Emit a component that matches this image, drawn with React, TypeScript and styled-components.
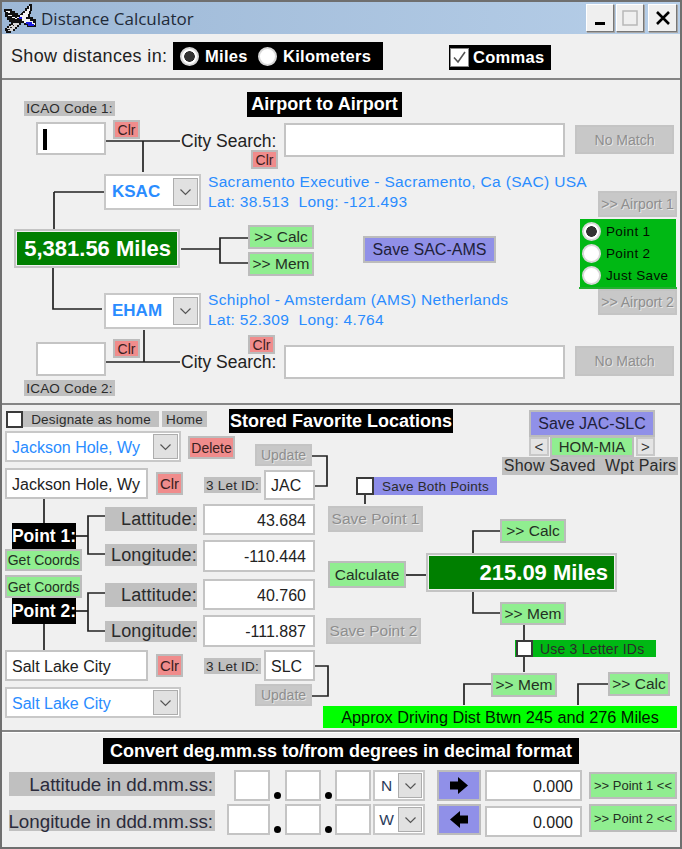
import React from 'react';
import styled, { createGlobalStyle, css } from 'styled-components';

const Global = createGlobalStyle`
  html, body { margin: 0; padding: 0; background: #f0f0f0; }
  #root { width: 682px; height: 849px; }
  * { box-sizing: border-box; }
`;

type Box = { $x: number; $y: number; $w: number; $h: number };

const at = css<Box>`
  position: absolute;
  left: ${(p) => p.$x}px;
  top: ${(p) => p.$y}px;
  width: ${(p) => p.$w}px;
  height: ${(p) => p.$h}px;
`;

const sans = `"Liberation Sans", Arial, sans-serif`;

const Window = styled.div`
  position: relative;
  width: 682px;
  height: 849px;
  overflow: hidden;
  background: #f0f0f0;
  display: flex;
  flex-direction: column;
  font-family: ${sans};
  color: #222;
  &::after {
    content: '';
    position: absolute;
    inset: 0;
    border: 2px solid #6f6f6f;
    pointer-events: none;
  }
`;

const TitleBar = styled.header`
  flex: 0 0 34px;
  display: flex;
  align-items: center;
  padding: 2px 4px 0 3px;
  background: linear-gradient(90deg, #9db8d6, #b6cee8);
`;

const Title = styled.span`
  margin-left: 5px;
  flex: 1;
  font: 17px "Open Sans", sans-serif;
  color: #1f2a38;
`;

const WinButton = styled.span<{ $w: number; $mr: number }>`
  width: ${(p) => p.$w}px;
  height: 28px;
  margin-right: ${(p) => p.$mr}px;
  display: flex;
  align-items: center;
  justify-content: center;
  background: #efefef;
  border: 1px solid #fff;
  border-right-color: #777;
  border-bottom-color: #777;
  box-shadow: 1px 1px 0 #a8a8a8;
`;

const UnitsBar = styled.section`
  flex: 0 0 46px;
  position: relative;
  display: flex;
  align-items: flex-start;
  padding: 8px 0 0 11px;
  border-bottom: 2px solid #858585;
`;

const UnitsLabel = styled.span`
  width: 162px;
  font-size: 18px;
  line-height: 28px;
  letter-spacing: 0.35px;
`;

const BlackStrip = styled.div<{ $w: number; $ml: number; $mt: number }>`
  width: ${(p) => p.$w}px;
  margin-left: ${(p) => p.$ml}px;
  margin-top: ${(p) => p.$mt}px;
  height: ${(p) => 28 - p.$mt}px;
  display: flex;
  align-items: center;
  background: #000;
  color: #fff;
  font-size: 16.5px;
  font-weight: 700;
  letter-spacing: 0.3px;
`;

const RadioDot = styled.span<{ $on?: boolean }>`
  flex: none;
  display: inline-block;
  width: 19px;
  height: 19px;
  border-radius: 50%;
  background: ${(p) =>
    p.$on ? 'radial-gradient(circle, #333 0 5px, #fff 5.6px)' : '#fff'};
  border: 2px solid #d8d8d8;
`;

const StripRadio = styled(RadioDot)`
  margin: 0 6px 0 7px;
`;

const StripText = styled.span<{ $w: number }>`
  width: ${(p) => p.$w}px;
`;

const CheckBox = styled.span`
  flex: none;
  display: flex;
  align-items: center;
  justify-content: center;
  width: 19px;
  height: 19px;
  background: #fff;
  border: 1px solid #888;
  margin: 0 4px 0 1px;
`;

const Canvas = styled.section<{ $h: number }>`
  position: relative;
  flex: 0 0 ${(p) => p.$h}px;
  border-bottom: 2px solid #858585;
`;

const Wires = styled.svg`
  position: absolute;
  left: 0;
  top: 0;
  width: 682px;
  height: 100%;
  pointer-events: none;
`;

const Heading = styled.div<Box>`
  ${at};
  background: #000;
  color: #fff;
  font-size: 18px;
  font-weight: 700;
  display: flex;
  align-items: center;
  justify-content: center;
  white-space: nowrap;
`;

const Tag = styled.div<Box & { $size?: number; $align?: string; $bg?: string; $pl?: number }>`
  ${at};
  background: ${(p) => p.$bg ?? '#c0c0c0'};
  color: #2b2b2b;
  font-size: ${(p) => p.$size ?? 13.5}px;
  display: flex;
  align-items: center;
  justify-content: ${(p) => p.$align ?? 'center'};
  padding-left: ${(p) => p.$pl ?? 0}px;
  white-space: nowrap;
  letter-spacing: 0.2px;
`;

const Input = styled.div<Box & { $size?: number; $right?: boolean }>`
  ${at};
  background: #fff;
  border: 2px solid #c4c4c4;
  font-size: ${(p) => p.$size ?? 16}px;
  display: flex;
  align-items: center;
  justify-content: ${(p) => (p.$right ? 'flex-end' : 'flex-start')};
  padding: 2px 7px 0 5px;
  color: #222;
  white-space: nowrap;
`;

const Caret = styled.span`
  width: 4px;
  height: 21px;
  background: #000;
`;

const Btn = styled.div<Box & { $tone: 'red' | 'green' | 'gray' | 'blue' | 'light'; $size?: number }>`
  ${at};
  display: flex;
  align-items: center;
  justify-content: center;
  white-space: nowrap;
  font-size: ${(p) => p.$size ?? 14}px;
  border: 2px solid #bcbcbc;
  ${(p) =>
    p.$tone === 'red'
      ? css`background: #f08c8c; color: #3a2020;`
      : p.$tone === 'green'
      ? css`background: #90ee90; color: #243024;`
      : p.$tone === 'blue'
      ? css`background: #9090e8; color: #20203a;`
      : p.$tone === 'light'
      ? css`background: #e4e4e4; color: #333; border-color: #c8c8c8;`
      : css`background: #c8c8c8; color: #8e8e8e; text-shadow: 1px 1px 0 #e6e6e6; border-color: #c4c4c4;`}
`;

const Combo = styled.div<Box & { $bold?: boolean; $size?: number }>`
  ${at};
  background: #fff;
  border: 2px solid #c8c8c8;
  display: flex;
  align-items: center;
  justify-content: space-between;
  padding: 0 1px 0 5px;
  color: #2a8cff;
  font-size: ${(p) => p.$size ?? 16}px;
  font-weight: ${(p) => (p.$bold ? 700 : 400)};
  white-space: nowrap;
`;

const ComboText = styled.span`
  padding-top: 2px;
`;

const BoldCode = styled.span`
  margin-left: 1px;
`;

const DropBtn = styled.span<{ $h?: number }>`
  flex: none;
  width: 25px;
  height: ${(p) => p.$h ?? 25}px;
  background: #e1e1e1;
  border: 1px solid #adadad;
  display: flex;
  align-items: center;
  justify-content: center;
`;

const Info = styled.div<{ $x: number; $y: number }>`
  position: absolute;
  left: ${(p) => p.$x}px;
  top: ${(p) => p.$y}px;
  color: #2a8cff;
  font-size: 15.5px;
  line-height: 20px;
  white-space: pre;
  letter-spacing: 0.33px;
`;

const SearchLabel = styled.div<{ $y: number }>`
  position: absolute;
  left: 181px;
  top: ${(p) => p.$y}px;
  font-size: 17.5px;
  line-height: 20px;
  color: #222;
  white-space: nowrap;
`;

const Result = styled.div<Box & { $size: number }>`
  ${at};
  background: #007f00;
  border: 2px solid #c4c4c4;
  box-shadow: inset 0 0 0 1px #f0f0f0;
  color: #fff;
  font-size: ${(p) => p.$size}px;
  font-weight: 700;
  display: flex;
  align-items: center;
  justify-content: flex-end;
  padding-right: 7px;
  white-space: nowrap;
`;

const RadioGroup = styled.div<Box>`
  ${at};
  background: #00b814;
  display: flex;
  flex-direction: column;
  padding: 1px 0 0 2px;
  &::after {
    content: '';
    position: absolute;
    left: -1px;
    right: -1px;
    bottom: -1px;
    height: 2px;
    background: #22b030;
  }
`;

const RadioRow = styled.div`
  display: flex;
  align-items: center;
  gap: 5px;
  height: 22px;
  font-size: 13.5px;
  color: #001000;
  letter-spacing: 0.35px;
`;

const BlackLabel = styled(Heading)`
  font-size: 17.5px;
`;

const FlagBox = styled.span<Box>`
  ${at};
  background: #fff;
  border: 2px solid #3a3a3a;
`;

const DriveBar = styled.div<Box>`
  ${at};
  background: #00ff00;
  color: #001800;
  font-size: 16.3px;
  display: flex;
  align-items: center;
  justify-content: center;
  white-space: nowrap;
`;

const ConvertSection = styled.section`
  flex: 1;
  display: flex;
  flex-direction: column;
  border-top: 1px solid #fff;
`;

const ConvertHead = styled.div`
  align-self: center;
  margin-top: 5px;
  width: 476px;
  height: 26px;
  background: #000;
  color: #fff;
  font-size: 18px;
  font-weight: 700;
  display: flex;
  align-items: center;
  justify-content: center;
`;

const DmsRow = styled.div<{ $mt: number }>`
  display: flex;
  align-items: flex-start;
  height: 31px;
  margin-top: ${(p) => p.$mt}px;
  padding-left: 9px;
`;

const DmsLabel = styled.div<{ $dy: number; $h: number }>`
  width: 206px;
  height: ${(p) => p.$h}px;
  margin-top: ${(p) => p.$dy}px;
  padding: 2px 2px 0 0;
  background: #c0c0c0;
  font-size: 18.8px;
  color: #2b2b3b;
  display: flex;
  align-items: center;
  justify-content: flex-end;
  white-space: nowrap;
`;

const DegCell = styled.div`
  width: 55px;
  display: flex;
  justify-content: flex-end;
`;

const Field = styled.span<{ $w: number }>`
  display: block;
  flex: none;
  width: ${(p) => p.$w}px;
  height: 31px;
  background: #fff;
  border: 2px solid #c4c4c4;
`;

const DotCell = styled.span<{ $w: number }>`
  flex: none;
  width: ${(p) => p.$w}px;
  height: 31px;
  display: flex;
  justify-content: center;
  align-items: flex-end;
`;

const Dot = styled.span`
  width: 7px;
  height: 7px;
  margin-bottom: 2px;
  border-radius: 50%;
  background: #000;
`;

const DirCombo = styled.div`
  flex: none;
  width: 52px;
  height: 31px;
  margin-left: 2px;
  background: #fff;
  border: 2px solid #c8c8c8;
  display: flex;
  align-items: center;
  padding: 0 1px 0 0;
  font-size: 15.5px;
  color: #2a3a5a;
`;

const DirLetter = styled.span`
  flex: 1;
  text-align: center;
`;

const DirDrop = styled(DropBtn)`
  width: 24px;
`;

const ArrowBtn = styled.div`
  flex: none;
  width: 44px;
  height: 31px;
  margin-left: 12px;
  background: #9090e8;
  border: 2px solid #bcbcbc;
  display: flex;
  align-items: center;
  justify-content: center;
`;

const Decimal = styled.div<{ $dy: number }>`
  flex: none;
  width: 97px;
  height: 31px;
  margin: ${(p) => p.$dy}px 0 0 4px;
  background: #fff;
  border: 2px solid #c4c4c4;
  font-size: 16px;
  display: flex;
  align-items: center;
  justify-content: flex-end;
  padding: 2px 7px 0 0;
`;

const PointBtn = styled.div<{ $h: number; $dy: number }>`
  flex: none;
  width: 88px;
  height: ${(p) => p.$h}px;
  margin: ${(p) => p.$dy}px 0 0 7px;
  background: #90ee90;
  border: 2px solid #bcbcbc;
  font-size: 13px;
  color: #243024;
  display: flex;
  align-items: center;
  justify-content: center;
  white-space: nowrap;
`;

const Plane = () => (
  <svg width="33" height="30" viewBox="0 0 33 30" shapeRendering="crispEdges">
    <path d="M1 6h8v2h3v2h3v2h2l3-4h2V5h2V3h2V1h3v7h-1v3h-1v3h3v2h3v2h2v4h-2v2h-9v-2h-3v-2h-3v2h-2v2h-2v2h-2v2H8v2H3v-2H2v-3h2v-2h2v-2h2v-2H6v-2H4v-3H2V9H1z" fill="#111" />
    <path d="M3 8h4v2H5v3h2v-1h2v2h3v2h2v-2h3v-2h3V10h2V8h2V6h2V3h1v5h-1v3h-1v3h-2v2h4v2h3v2h2v2h-6v-2h-5v-2h-2v-2h-3v-1H9v-2H7v-1H5v-3H3z" fill="#f4f4f4" />
    <path d="M16 14h3v2h-3zM23 19h6v2h2v2h-6v-2h-2z" fill="#1c1ce0" />
    <path d="M13 20h3v2h-2v2h-2v2h-2v2H5v-2H4v-1h2v-2h2v-1h2v-2h3z" fill="#d8d8d8" />
    <path d="M7 24h2v1H7zM10 22h1v1h-1zM5 26h2v1H5z" fill="#222" />
  </svg>
);

const Chevron = () => (
  <svg width="13" height="8" viewBox="0 0 13 8">
    <path d="M1.5 1.5l5 5 5-5" fill="none" stroke="#555" strokeWidth="1.2" />
  </svg>
);

const Tick = () => (
  <svg width="15" height="15" viewBox="0 0 15 15">
    <path d="M2 7.5l4 4.5 7-10" fill="none" stroke="#555" strokeWidth="1.6" />
  </svg>
);

const ArrowRight = () => (
  <svg width="18" height="17" viewBox="0 0 18 17">
    <path d="M0 4.5h8V0l10 8.5L8 17v-4.5H0z" fill="#000" />
  </svg>
);

const ArrowLeft = () => (
  <svg width="18" height="17" viewBox="0 0 18 17">
    <path d="M18 4.5h-8V0L0 8.5 10 17v-4.5h8z" fill="#000" />
  </svg>
);

const wire = (d: string) => <path key={d} d={d} fill="none" stroke="#222" strokeWidth="1.7" />;

const airportWires = [
  'M106 61H180', 'M143 61V92', 'M54 112H104', 'M54 112V152', 'M181 169H220', 'M248 158H220V183H248',
  'M53 184V229H102', 'M144 250V282', 'M106 282H180',
];

const favWires = [
  'M312 51H327V81H314', 'M44 93V118', 'M76 131H88', 'M105 111H88V149H105', 'M76 206H88', 'M105 188H88V226H105',
  'M44 219V245', 'M315 261H328V291H312', 'M365 90V99', 'M406 170H427', 'M500 126H473V149', 'M473 187V208H500',
  'M524 220V235', 'M524 252V267', 'M491 279H464V300', 'M608 279H578V300',
];

export default function App() {
  return (
    <Window>
      <Global />
      <TitleBar>
        <Plane />
        <Title>Distance Calculator</Title>
        <WinButton $w={28} $mr={2}>
          <svg width="10" height="14" viewBox="0 0 10 14"><rect x="0" y="11" width="10" height="3" fill="#000" /></svg>
        </WinButton>
        <WinButton $w={28} $mr={4}>
          <svg width="16" height="16" viewBox="0 0 16 16"><rect x="1" y="1" width="14" height="14" fill="none" stroke="#b8b8b8" strokeWidth="1.5" /></svg>
        </WinButton>
        <WinButton $w={29} $mr={1}>
          <svg width="14" height="14" viewBox="0 0 14 14"><path d="M1 1l12 12M13 1L1 13" stroke="#000" strokeWidth="2.6" /></svg>
        </WinButton>
      </TitleBar>

      <UnitsBar>
        <UnitsLabel>Show distances in:</UnitsLabel>
        <BlackStrip $w={210} $ml={0} $mt={0}>
          <StripRadio $on />
          <StripText $w={46}>Miles</StripText>
          <StripRadio />
          <span>Kilometers</span>
        </BlackStrip>
        <BlackStrip $w={102} $ml={66} $mt={3}>
          <CheckBox><Tick /></CheckBox>
          <span>Commas</span>
        </BlackStrip>
      </UnitsBar>

      <Canvas $h={325}>
        <Wires>{airportWires.map(wire)}</Wires>
        <Heading $x={247} $y={12} $w={155} $h={25}>Airport to Airport</Heading>
        <Tag $x={24} $y={21} $w={91} $h={15}>ICAO Code 1:</Tag>
        <Input $x={36} $y={42} $w={70} $h={33}><Caret /></Input>
        <Btn $tone="red" $x={113} $y={40} $w={27} $h={19}>Clr</Btn>
        <SearchLabel $y={51}>City Search:</SearchLabel>
        <Input $x={284} $y={43} $w={281} $h={34} />
        <Btn $tone="gray" $x={575} $y={45} $w={99} $h={29}>No Match</Btn>
        <Btn $tone="red" $x={251} $y={70} $w={27} $h={19}>Clr</Btn>

        <Combo $x={104} $y={94} $w={97} $h={36} $bold $size={17}>
          <BoldCode>KSAC</BoldCode>
          <DropBtn $h={28}><Chevron /></DropBtn>
        </Combo>
        <Info $x={208} $y={92}>{'Sacramento Executive - Sacramento, Ca (SAC) USA\nLat: 38.513  Long: -121.493'}</Info>
        <Btn $tone="gray" $x={598} $y={111} $w={79} $h={26}>&gt;&gt; Airport 1</Btn>
        <RadioGroup $x={580} $y={139} $w={96} $h={69}>
          <RadioRow><RadioDot $on /><span>Point 1</span></RadioRow>
          <RadioRow><RadioDot /><span>Point 2</span></RadioRow>
          <RadioRow><RadioDot /><span>Just Save</span></RadioRow>
        </RadioGroup>
        <Btn $tone="gray" $x={598} $y={209} $w={79} $h={26}>&gt;&gt; Airport 2</Btn>
        <Btn $tone="blue" $x={363} $y={156} $w={133} $h={27} $size={16}>Save SAC-AMS</Btn>

        <Result $x={14} $y={149} $w={166} $h={39} $size={22}>5,381.56 Miles</Result>
        <Btn $tone="green" $x={248} $y={145} $w={66} $h={24} $size={15.5}>&gt;&gt; Calc</Btn>
        <Btn $tone="green" $x={248} $y={172} $w={66} $h={24} $size={15.5}>&gt;&gt; Mem</Btn>

        <Combo $x={104} $y={213} $w={97} $h={36} $bold $size={17}>
          <BoldCode>EHAM</BoldCode>
          <DropBtn $h={28}><Chevron /></DropBtn>
        </Combo>
        <Info $x={208} $y={210}>{'Schiphol - Amsterdam (AMS) Netherlands\nLat: 52.309  Long: 4.764'}</Info>
        <Input $x={36} $y={262} $w={70} $h={34} />
        <Btn $tone="red" $x={113} $y={259} $w={27} $h={19}>Clr</Btn>
        <Btn $tone="red" $x={248} $y={255} $w={27} $h={19}>Clr</Btn>
        <SearchLabel $y={272}>City Search:</SearchLabel>
        <Input $x={284} $y={265} $w={281} $h={34} />
        <Btn $tone="gray" $x={575} $y={266} $w={99} $h={30}>No Match</Btn>
        <Tag $x={24} $y={300} $w={91} $h={16}>ICAO Code 2:</Tag>
      </Canvas>

      <Canvas $h={327}>
        <Wires>{favWires.map(wire)}</Wires>
        <FlagBox $x={6} $y={6} $w={17} $h={17} />
        <Tag $x={23} $y={6} $w={136} $h={16}>Designate as home</Tag>
        <Tag $x={162} $y={6} $w={45} $h={16}>Home</Tag>
        <Heading $x={229} $y={4} $w={224} $h={24}>Stored Favorite Locations</Heading>
        <Btn $tone="blue" $x={529} $y={5} $w={126} $h={27} $size={16}>Save JAC-SLC</Btn>
        <Btn $tone="light" $x={529} $y={32} $w={20} $h={19} $size={15}>&lt;</Btn>
        <Btn $tone="green" $x={550} $y={31} $w={84} $h={21} $size={15}>HOM-MIA</Btn>
        <Btn $tone="light" $x={636} $y={32} $w={19} $h={19} $size={15}>&gt;</Btn>
        <Tag $x={502} $y={52} $w={176} $h={18} $size={16}>Show Saved&nbsp;&nbsp;Wpt Pairs</Tag>

        <Combo $x={5} $y={26} $w={176} $h={31}>
          <ComboText>Jackson Hole, Wy</ComboText>
          <DropBtn><Chevron /></DropBtn>
        </Combo>
        <Btn $tone="red" $x={188} $y={31} $w={47} $h={23} $size={14}>Delete</Btn>
        <Btn $tone="gray" $x={255} $y={39} $w={57} $h={22}>Update</Btn>
        <Input $x={5} $y={63} $w={143} $h={31}>Jackson Hole, Wy</Input>
        <Btn $tone="red" $x={156} $y={67} $w={27} $h={23} $size={15}>Clr</Btn>
        <Tag $x={204} $y={72} $w={57} $h={16}>3 Let ID:</Tag>
        <Input $x={264} $y={65} $w={51} $h={30}>JAC</Input>

        <BlackLabel $x={12} $y={118} $w={64} $h={26}>Point 1:</BlackLabel>
        <Tag $x={105} $y={102} $w={92} $h={24} $size={18} $align="flex-end">Lattitude:</Tag>
        <Tag $x={105} $y={139} $w={92} $h={22} $size={18} $align="flex-end">Longitude:</Tag>
        <Input $x={203} $y={99} $w={112} $h={31} $right>43.684</Input>
        <Input $x={203} $y={135} $w={112} $h={32} $right>-110.444</Input>
        <Btn $tone="green" $x={5} $y={144} $w={77} $h={22} $size={14}>Get Coords</Btn>
        <Btn $tone="green" $x={5} $y={170} $w={77} $h={23} $size={14}>Get Coords</Btn>
        <BlackLabel $x={12} $y={193} $w={64} $h={26}>Point 2:</BlackLabel>
        <Tag $x={105} $y={178} $w={92} $h={24} $size={18} $align="flex-end">Lattitude:</Tag>
        <Tag $x={105} $y={216} $w={92} $h={21} $size={18} $align="flex-end">Longitude:</Tag>
        <Input $x={203} $y={174} $w={112} $h={31} $right>40.760</Input>
        <Input $x={203} $y={210} $w={112} $h={32} $right>-111.887</Input>
        <Input $x={5} $y={245} $w={143} $h={31}>Salt Lake City</Input>
        <Btn $tone="red" $x={156} $y={249} $w={27} $h={23} $size={15}>Clr</Btn>
        <Combo $x={5} $y={282} $w={176} $h={31}>
          <ComboText>Salt Lake City</ComboText>
          <DropBtn><Chevron /></DropBtn>
        </Combo>
        <Tag $x={204} $y={253} $w={57} $h={16}>3 Let ID:</Tag>
        <Input $x={264} $y={245} $w={51} $h={31}>SLC</Input>
        <Btn $tone="gray" $x={255} $y={279} $w={57} $h={22}>Update</Btn>

        <FlagBox $x={356} $y={72} $w={18} $h={18} />
        <Tag $x={374} $y={72} $w={123} $h={18} $bg="#8c8ce8">Save Both Points</Tag>
        <Btn $tone="gray" $x={328} $y={101} $w={95} $h={26} $size={15.5}>Save Point 1</Btn>
        <Btn $tone="gray" $x={326} $y={213} $w={95} $h={26} $size={15.5}>Save Point 2</Btn>
        <Btn $tone="green" $x={328} $y={156} $w={78} $h={27} $size={15.5}>Calculate</Btn>
        <Result $x={426} $y={148} $w={191} $h={39} $size={22}>215.09 Miles</Result>
        <Btn $tone="green" $x={500} $y={114} $w={66} $h={24} $size={15.5}>&gt;&gt; Calc</Btn>
        <Btn $tone="green" $x={500} $y={197} $w={66} $h={23} $size={15.5}>&gt;&gt; Mem</Btn>
        <Tag $x={515} $y={235} $w={141} $h={17} $size={14} $bg="#00b814" $align="flex-start" $pl={25}>Use 3 Letter IDs</Tag>
        <FlagBox $x={516} $y={235} $w={17} $h={17} />
        <Btn $tone="green" $x={491} $y={268} $w={66} $h={24} $size={15.5}>&gt;&gt; Mem</Btn>
        <Btn $tone="green" $x={608} $y={267} $w={62} $h={24} $size={15.5}>&gt;&gt; Calc</Btn>
        <DriveBar $x={323} $y={301} $w={354} $h={22}>Approx Driving Dist Btwn 245 and 276 Miles</DriveBar>
      </Canvas>

      <ConvertSection>
        <ConvertHead>Convert deg.mm.ss to/from degrees in decimal format</ConvertHead>
        <DmsRow $mt={6}>
          <DmsLabel $dy={2} $h={24}>Lattitude in dd.mm.ss:</DmsLabel>
          <DegCell><Field $w={36} /></DegCell>
          <DotCell $w={15}><Dot /></DotCell>
          <Field $w={36} />
          <DotCell $w={14}><Dot /></DotCell>
          <Field $w={36} />
          <DirCombo><DirLetter>N</DirLetter><DirDrop><Chevron /></DirDrop></DirCombo>
          <ArrowBtn><ArrowRight /></ArrowBtn>
          <Decimal $dy={0}>0.000</Decimal>
          <PointBtn $h={27} $dy={2}>&gt;&gt; Point 1 &lt;&lt;</PointBtn>
        </DmsRow>
        <DmsRow $mt={3}>
          <DmsLabel $dy={6} $h={21}>Longitude in ddd.mm.ss:</DmsLabel>
          <DegCell><Field $w={43} /></DegCell>
          <DotCell $w={15}><Dot /></DotCell>
          <Field $w={36} />
          <DotCell $w={14}><Dot /></DotCell>
          <Field $w={36} />
          <DirCombo><DirLetter>W</DirLetter><DirDrop><Chevron /></DirDrop></DirCombo>
          <ArrowBtn><ArrowLeft /></ArrowBtn>
          <Decimal $dy={2}>0.000</Decimal>
          <PointBtn $h={28} $dy={0}>&gt;&gt; Point 2 &lt;&lt;</PointBtn>
        </DmsRow>
      </ConvertSection>
    </Window>
  );
}
